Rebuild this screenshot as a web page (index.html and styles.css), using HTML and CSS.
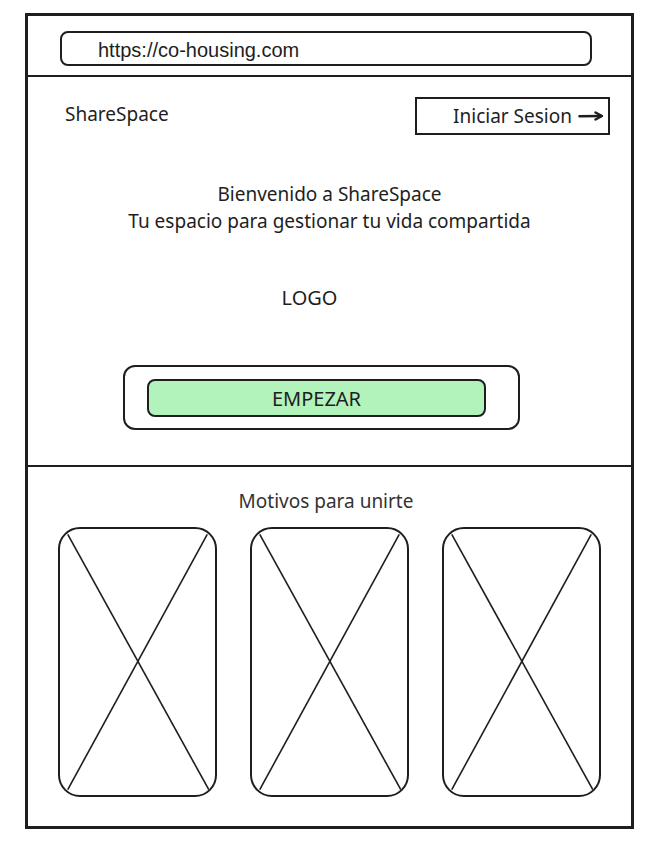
FILE: index.html
```html
<!DOCTYPE html>
<html lang="es">
<head>
    <meta charset="UTF-8">
    <meta name="viewport" content="width=device-width, initial-scale=1.0">
    <title>ShareSpace - Wireframe</title>
    <link rel="stylesheet" href="styles.css">
</head>
<body>
    <div class="frame">
        <div class="browser-bar">
            <div class="url-box">https://co-housing.com</div>
        </div>

        <div class="page">
            <div class="header">
                <span class="brand">ShareSpace</span>
                <button class="login-btn">
                    Iniciar Sesion
                    <svg class="arrow" width="26" height="12" viewBox="0 0 26 12">
                        <path d="M1.5 6.2 L23 6" />
                        <path d="M17.5 2.5 L24 6 L17.5 9.5" />
                    </svg>
                </button>
            </div>

            <div class="hero">
                <p class="welcome">Bienvenido a ShareSpace<br>Tu espacio para gestionar tu vida compartida</p>
                <p class="logo">LOGO</p>
                <div class="start-wrap">
                    <button class="start-btn">EMPEZAR</button>
                </div>
            </div>
        </div>

        <div class="reasons">
            <h2>Motivos para unirte</h2>
            <div class="cards">
                <div class="card">
                    <svg viewBox="0 0 100 100" preserveAspectRatio="none">
                        <line x1="5" y1="2" x2="96" y2="98" />
                        <line x1="95" y1="2" x2="5" y2="98" />
                    </svg>
                </div>
                <div class="card">
                    <svg viewBox="0 0 100 100" preserveAspectRatio="none">
                        <line x1="5" y1="2" x2="96" y2="98" />
                        <line x1="95" y1="2" x2="5" y2="98" />
                    </svg>
                </div>
                <div class="card">
                    <svg viewBox="0 0 100 100" preserveAspectRatio="none">
                        <line x1="5" y1="2" x2="96" y2="98" />
                        <line x1="95" y1="2" x2="5" y2="98" />
                    </svg>
                </div>
            </div>
        </div>
    </div>
</body>
</html>
```

FILE: styles.css
```css
body {
    margin: 0;
    background-color: #fff;
    color: #1e1e1e;
    font-family: 'Noto Sans', 'Lato', sans-serif;
}

.frame {
    margin: 13px 0 0 25px;
    width: 603px;
    border: 3px solid #1e1e1e;
}

.browser-bar {
    height: 61px;
    border-bottom: 2px solid #1e1e1e;
    padding: 15px 0 0 32px;
    box-sizing: border-box;
}

.url-box {
    width: 532px;
    height: 35px;
    box-sizing: border-box;
    border: 2px solid #1e1e1e;
    border-radius: 8px;
    padding-left: 36px;
    font-family: 'Liberation Sans', Arial, sans-serif;
    font-size: 20px;
    line-height: 34px;
}

.page {
    padding: 20px 21px 0 37px;
}

.header {
    display: flex;
    justify-content: space-between;
    align-items: center;
}

.brand {
    font-size: 19px;
    margin-top: -4px;
}

.login-btn {
    display: flex;
    align-items: center;
    justify-content: flex-end;
    gap: 6px;
    width: 195px;
    height: 38px;
    border: 2px solid #1e1e1e;
    background: #fff;
    color: #1e1e1e;
    font-family: inherit;
    font-size: 19px;
    padding: 0 4px 0 0;
}

.arrow path {
    fill: none;
    stroke: #1e1e1e;
    stroke-width: 2.5;
    stroke-linecap: round;
    stroke-linejoin: round;
}

.hero {
    text-align: center;
    margin-left: -16px;
}

.welcome {
    margin: 46px 0 0;
    font-size: 19px;
    line-height: 27px;
}

.logo {
    margin: 49px 0 0 -40px;
    font-size: 20px;
}

.start-wrap {
    width: 397px;
    height: 65px;
    box-sizing: border-box;
    margin: 54px 0 0 74px;
    border: 2px solid #1e1e1e;
    border-radius: 12px;
    padding: 12px 0 0 22px;
    text-align: left;
}

.start-btn {
    width: 339px;
    height: 38px;
    background-color: #b2f2bb;
    border: 2px solid #1e1e1e;
    border-radius: 8px;
    font-family: inherit;
    font-size: 20px;
    color: #1e1e1e;
}

.reasons {
    margin-top: 35px;
    border-top: 2px solid #1e1e1e;
    padding: 21px 0 29px 30px;
}

.reasons h2 {
    margin: 0 37px 13px 0;
    text-align: center;
    font-weight: normal;
    font-size: 19px;
    color: #333;
}

.cards {
    display: flex;
    gap: 33px;
}

.card {
    flex: 0 0 159px;
    height: 270px;
    box-sizing: border-box;
    border: 2px solid #1e1e1e;
    border-radius: 22px;
    overflow: hidden;
}

.card svg {
    display: block;
    width: 100%;
    height: 100%;
}

.card line {
    stroke: #1e1e1e;
    stroke-width: 1.6;
    vector-effect: non-scaling-stroke;
}
```
